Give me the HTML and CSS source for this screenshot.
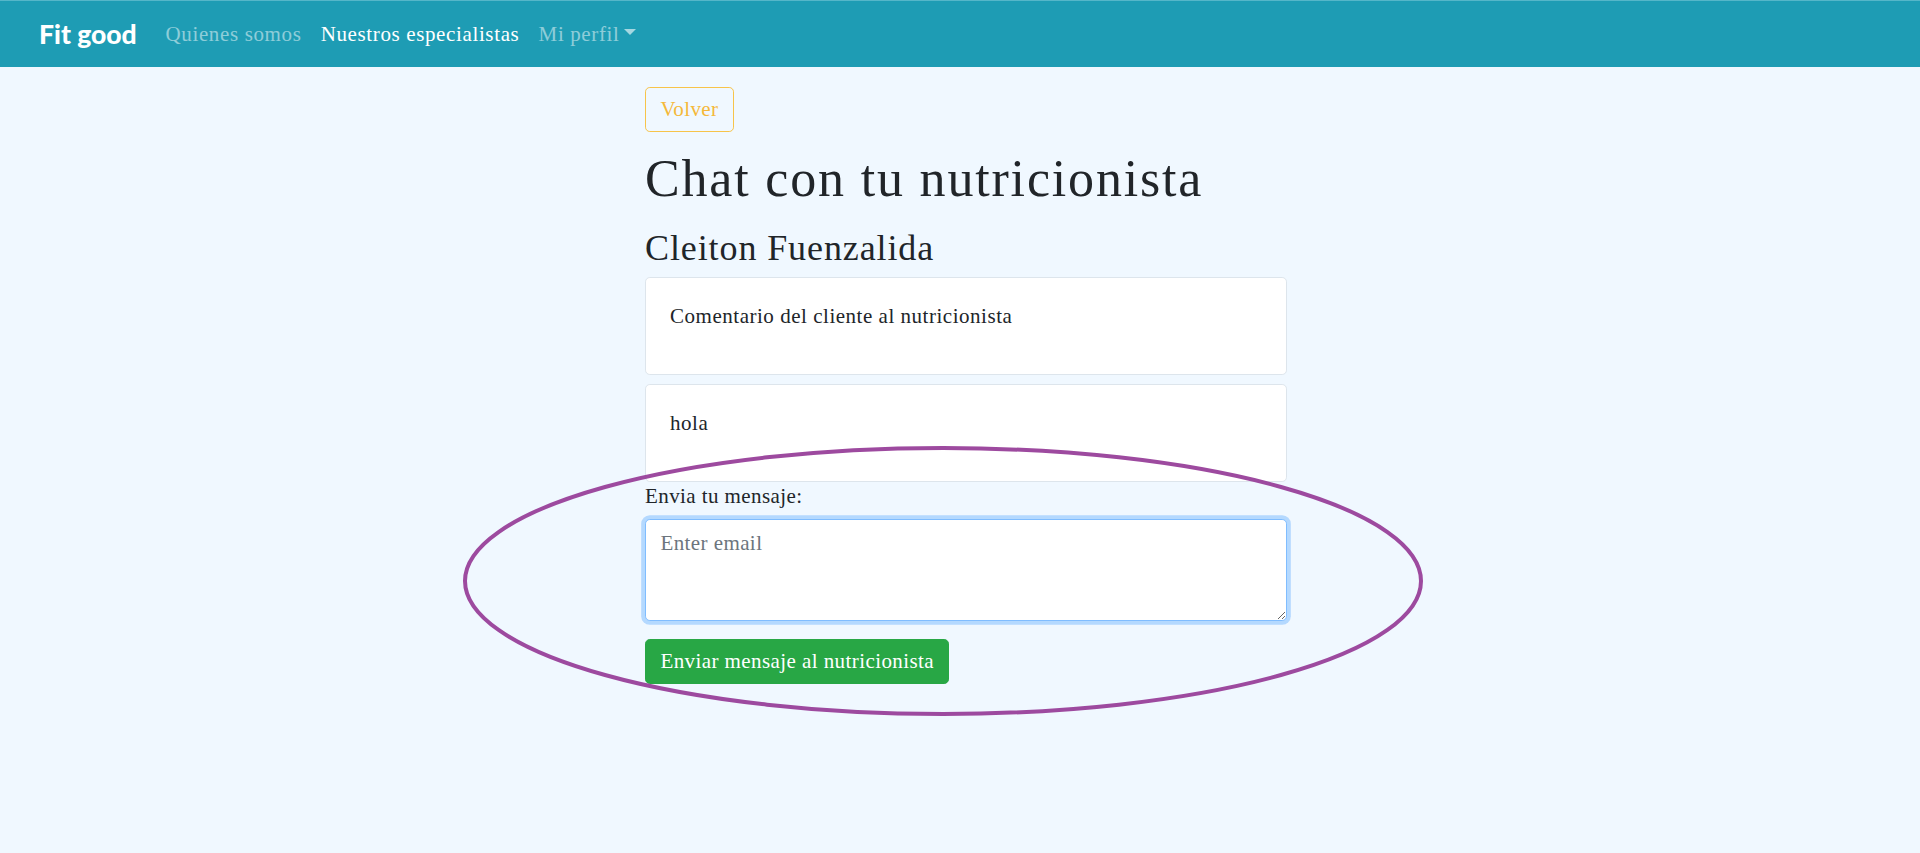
FILE: index.html
```html
<!DOCTYPE html>
<html lang="es">
<head>
<meta charset="utf-8">
<title>Fit good - Chat con tu nutricionista</title>
<link rel="stylesheet" href="styles.css">
</head>
<body>
<nav class="navbar">
  <a class="brand" href="#">Fit good</a>
  <ul class="nav">
    <li><a class="nav-link" href="#">Quienes somos</a></li>
    <li><a class="nav-link active" href="#">Nuestros especialistas</a></li>
    <li><a class="nav-link" href="#">Mi perfil<span class="caret"></span></a></li>
  </ul>
</nav>
<main class="page">
  <div class="col">
    <button class="btn btn-outline-warning" type="button">Volver</button>
    <h1 class="title">Chat con tu nutricionista</h1>
    <h3 class="subtitle">Cleiton Fuenzalida</h3>
    <div class="card"><div class="card-body"><p>Comentario del cliente al nutricionista</p></div></div>
    <div class="card card-second"><div class="card-body"><p>hola</p></div></div>
    <form class="form">
      <label class="label" for="msg">Envia tu mensaje:</label>
      <textarea id="msg" class="form-control focused" placeholder="Enter email"></textarea>
      <button class="btn btn-success" type="button">Enviar mensaje al nutricionista</button>
    </form>
  </div>
</main>
<svg class="annotation" width="1920" height="853" viewBox="0 0 1920 853">
  <ellipse cx="943" cy="581" rx="478" ry="133" fill="none" stroke="#9d4a9f" stroke-width="4"/>
</svg>
</body>
</html>
```

FILE: styles.css
```css
* { box-sizing: border-box; }
html, body { margin: 0; padding: 0; }
body {
  background: #f0f8ff;
  color: #212529;
  font-family: "Liberation Serif", "Times New Roman", serif;
  font-size: 21px;
  letter-spacing: 0.025em;
  line-height: 28.8px;
  min-height: 853px;
  position: relative;
  overflow: hidden;
}

.navbar {
  display: flex;
  align-items: center;
  height: 67px;
  padding: 9.6px 19.2px 9.6px 39px;
  background: #1e9cb4;
  border-top: 1px solid #55b6c9;
}
.brand {
  font-family: Lato, "Liberation Sans", sans-serif;
  font-weight: 900;
  font-size: 26.5px;
  letter-spacing: 0;
  line-height: 36px;
  color: #fff;
  text-decoration: none;
  margin-right: 19.2px;
  padding: 6px 0;
}
.nav {
  display: flex;
  list-style: none;
  margin: 0;
  padding: 0;
}
.nav-link {
  display: flex;
  align-items: center;
  padding: 9.6px 9.6px;
  letter-spacing: 0.03em;
  color: rgba(255, 255, 255, 0.5);
  text-decoration: none;
}
.nav-link.active { color: #fff; }
.caret {
  display: inline-block;
  margin-left: 5px;
  width: 0;
  height: 0;
  border-top: 6px solid rgba(255, 255, 255, 0.6);
  border-left: 6px solid transparent;
  border-right: 6px solid transparent;
  margin-bottom: 4px;
}

.page {
  display: flex;
  justify-content: center;
  padding-left: 12px;
}
.col {
  width: 642px;
  display: flex;
  flex-direction: column;
}

.btn {
  align-self: flex-start;
  font-family: inherit;
  font-size: 21px;
  letter-spacing: 0.02em;
  line-height: 28.8px;
  padding: 7.2px 14.4px;
  border: 1px solid transparent;
  border-radius: 4.8px;
  background: transparent;
  cursor: pointer;
}
.btn-outline-warning {
  margin-top: 20px;
  color: #f5b83a;
  border-color: #f7c44a;
}
.btn-success {
  margin-top: 17.6px;
  color: #fff;
  background: #28a745;
  border-color: #28a745;
}

.title {
  margin: 17.8px 0 20px;
  font-weight: 400;
  font-size: 52px;
  letter-spacing: 0.035em;
  line-height: 57.6px;
}
.subtitle {
  margin: 0 0 9px;
  font-weight: 400;
  font-size: 36px;
  letter-spacing: 0.025em;
  line-height: 40.3px;
}

.card {
  background: #fff;
  border: 1px solid #dde5ec;
  border-radius: 4.8px;
}
.card-second { margin-top: 9.6px; }
.card-body { padding: 24px; }
.card-body p { margin: 0 0 19.2px; }

.form {
  display: flex;
  flex-direction: column;
}
.label {
  display: block;
  margin-bottom: 8px;
  letter-spacing: 0.02em;
}
.form-control {
  display: block;
  width: 100%;
  height: 102px;
  padding: 9px 14.4px;
  font-family: inherit;
  font-size: 21px;
  letter-spacing: 0.02em;
  line-height: 28.8px;
  color: #495057;
  background: #fff;
  border: 1px solid #ced4da;
  border-radius: 4.8px;
  outline: none;
}
.form-control::placeholder { color: #6c757d; opacity: 1; }
.form-control.focused {
  border-color: #80bdff;
  box-shadow: 0 0 0 3.8px rgba(0, 123, 255, 0.25);
}

.annotation {
  position: absolute;
  top: 0;
  left: 0;
  pointer-events: none;
}
```
